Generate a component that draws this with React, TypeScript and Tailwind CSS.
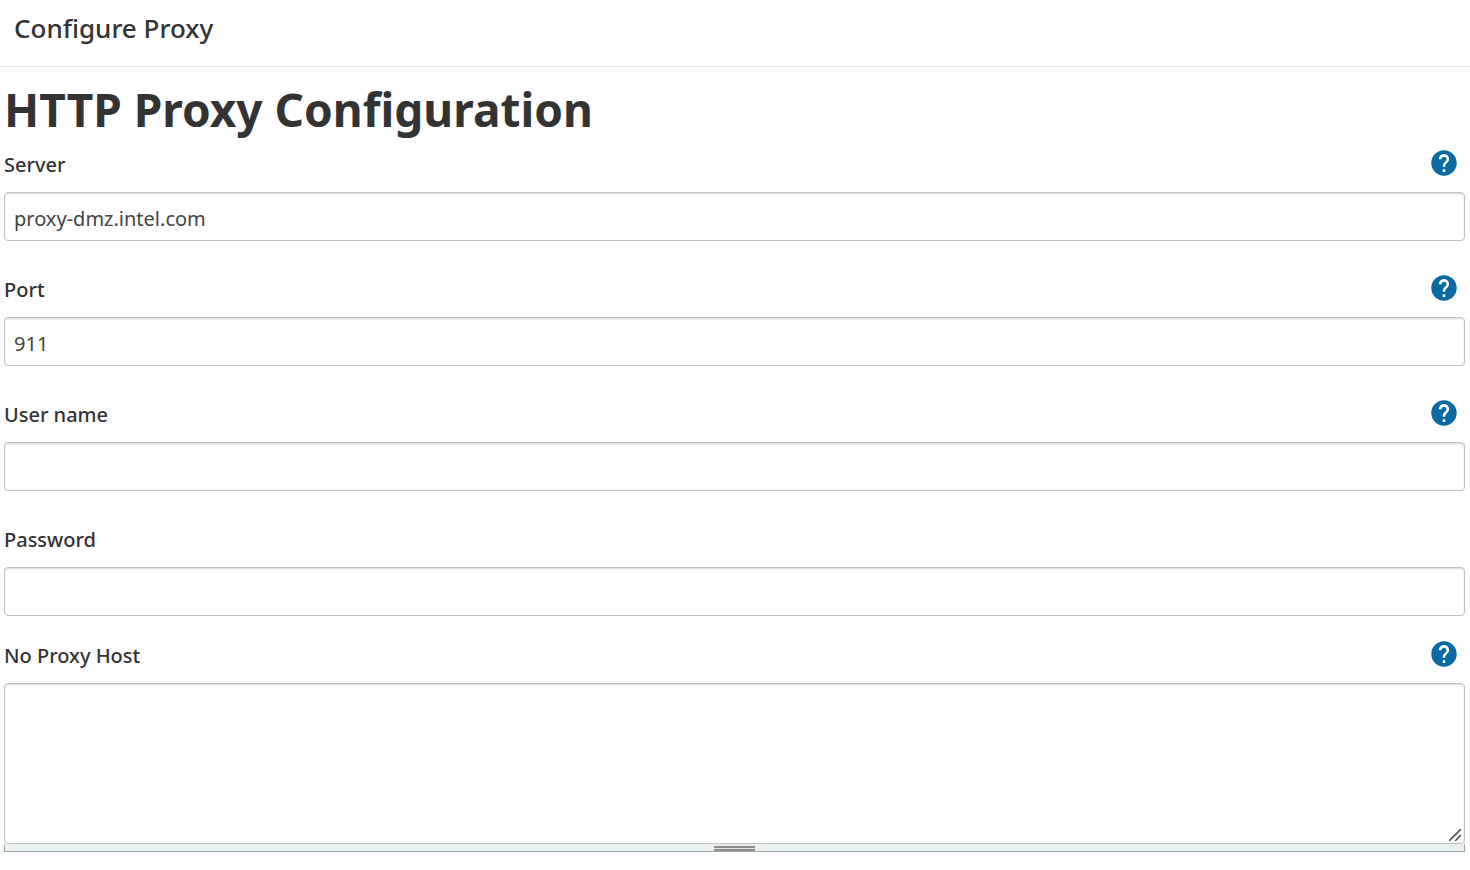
import React from "react";

function HelpIcon({ label }: { label: string }) {
  return (
    <button type="button" aria-label={`Help for ${label}`} className="mr-2 size-[26px]">
      <svg viewBox="1.8 1.8 20.4 20.4" className="size-full" fill="#0b6aa2" aria-hidden="true">
        <path d="M12 2C6.48 2 2 6.48 2 12s4.48 10 10 10 10-4.48 10-10S17.52 2 12 2zm1 17h-2v-2h2v2zm2.07-7.75l-.9.92C13.45 12.9 13 13.5 13 15h-2v-.5c0-1.1.45-2.1 1.17-2.83l1.24-1.26c.37-.36.59-.86.59-1.41 0-1.1-.9-2-2-2s-2 .9-2 2H8c0-2.21 1.79-4 4-4s4 1.79 4 4c0 .88-.36 1.68-.93 2.25z" />
      </svg>
    </button>
  );
}

const field =
  "block w-full rounded border border-[#c3c3c3] bg-white px-[9px] text-xl font-normal text-[#444] shadow-[inset_0_1px_2px_rgba(0,0,0,0.15)] outline-none";

function FieldLabel({ id, label, help }: { id: string; label: string; help: boolean }) {
  return (
    <div className="mb-[14px] flex h-7 items-start justify-between">
      <label htmlFor={id} className="leading-[30px]">{label}</label>
      {help && <HelpIcon label={label} />}
    </div>
  );
}

type InputRowProps = { id: string; label: string; help?: boolean; value?: string; type?: string };

function InputRow({ id, label, help = true, value, type = "text" }: InputRowProps) {
  return (
    <div>
      <FieldLabel id={id} label={label} help={help} />
      <input id={id} type={type} defaultValue={value} className={`${field} h-[49px] pt-[3px]`} />
    </div>
  );
}

export default function App() {
  return (
    <div className="bg-white font-['Noto_Sans',sans-serif] text-xl font-medium text-[#333]">
      <header className="h-[67px] border-b border-[#e5e5e5] px-3.5 pt-2.5">
        <div className="text-[26px] leading-9">Configure Proxy</div>
      </header>
      <main className="pr-[5px] pb-4 pl-1">
        <h1 className="h-[83px] pt-2 text-[46px] leading-[68px] font-bold">HTTP Proxy Configuration</h1>
        <form>
          <div className="flex flex-col gap-[34px]">
            <InputRow id="server" label="Server" value="proxy-dmz.intel.com" />
            <InputRow id="port" label="Port" value="911" />
            <InputRow id="user" label="User name" />
            <InputRow id="password" label="Password" type="password" help={false} />
          </div>
          <div className="mt-[25px]">
            <FieldLabel id="hosts" label="No Proxy Host" help />
            <div className="relative">
              <textarea id="hosts" className={`${field} h-[161px] resize-none`} />
              <svg viewBox="0 0 12 12" className="absolute right-1 bottom-[3px] size-3" fill="none" stroke="#555" strokeWidth="1.6" aria-hidden="true">
                <path d="M0 12L12 0M6 12l6-6" />
              </svg>
            </div>
            <div className="flex h-2 flex-col items-center border-x border-b border-[#9aa5ab] bg-[#e9eef1] pt-0.5">
              <div className="h-[5px] w-[41px] border-y-2 border-[#8b8c88] bg-[#e2e3e1]" />
            </div>
          </div>
        </form>
      </main>
    </div>
  );
}
